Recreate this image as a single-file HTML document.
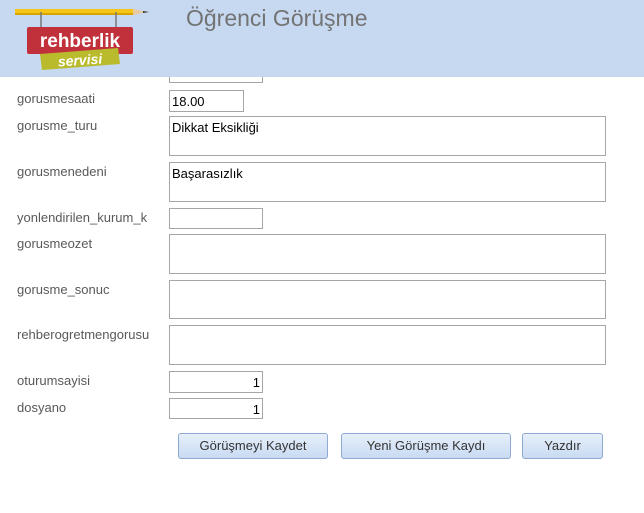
<!DOCTYPE html>
<html><head><meta charset="utf-8"><style>
*{margin:0;padding:0;box-sizing:border-box}
body{width:644px;height:513px;background:#fff;position:relative;overflow:hidden;font-family:"Liberation Sans",sans-serif;font-size:13px}
.hdr{position:absolute;left:0;top:0;width:644px;height:77px;background:#c6d9f1}
.title{position:absolute;left:186px;top:5px;font-size:23px;color:#737373}
.l{position:absolute;left:17px;color:#595959;font-size:13px}
.b{position:absolute;left:169px;border:1px solid #a6a6a6;background:#fff;color:#000;padding:3px 2px;font-size:13px;line-height:15px}
.btn{position:absolute;top:433px;height:26px;border:1px solid #8eaad0;border-radius:3px;background:linear-gradient(#e8f0fb,#c8daf2);color:#333;text-align:center;line-height:24px;font-size:13px}
</style></head><body>
<div class="b" style="top:62px;width:94px;height:21px"></div>
<div class="hdr"></div>
<div class="title">Öğrenci Görüşme</div>
<svg style="position:absolute;left:0;top:0" width="160" height="75">
<rect x="15" y="9" width="118" height="6" fill="#f5c518"/>
<rect x="15" y="13" width="118" height="2" fill="#d9a400"/>
<polygon points="133,9 147,12 133,15" fill="#e8c9a0"/>
<polygon points="143,11 149,12 143,13" fill="#333"/>
<line x1="41" y1="12" x2="41" y2="28" stroke="#777" stroke-width="1.5"/>
<line x1="116" y1="12" x2="116" y2="28" stroke="#777" stroke-width="1.5"/>
<rect x="27" y="27" width="106" height="27" rx="2" fill="#c0313b"/>
<text x="80" y="47" text-anchor="middle" font-family="Liberation Sans" font-weight="bold" font-size="19" fill="#fff">rehberlik</text>
<polygon points="40,54 118,48 120,64 42,70" fill="#b9bb2c"/>
<text x="80" y="65" text-anchor="middle" font-family="Liberation Sans" font-weight="bold" font-style="italic" font-size="14" fill="#fff" transform="rotate(-4 80 60)">servisi</text>
</svg>
<div class="l" style="top:91px">gorusmesaati</div>
<div class="b" style="top:90px;width:75px;height:22px">18.00</div>
<div class="l" style="top:118px">gorusme_turu</div>
<div class="b" style="top:116px;width:437px;height:40px">Dikkat Eksikliği</div>
<div class="l" style="top:164px">gorusmenedeni</div>
<div class="b" style="top:162px;width:437px;height:40px">Başarasızlık</div>
<div class="l" style="top:210px">yonlendirilen_kurum_k</div>
<div class="b" style="top:208px;width:94px;height:21px"></div>
<div class="l" style="top:236px">gorusmeozet</div>
<div class="b" style="top:234px;width:437px;height:40px"></div>
<div class="l" style="top:282px">gorusme_sonuc</div>
<div class="b" style="top:280px;width:437px;height:39px"></div>
<div class="l" style="top:327px">rehberogretmengorusu</div>
<div class="b" style="top:325px;width:437px;height:40px"></div>
<div class="l" style="top:373px">oturumsayisi</div>
<div class="b" style="top:371px;width:94px;height:22px;text-align:right">1</div>
<div class="l" style="top:400px">dosyano</div>
<div class="b" style="top:398px;width:94px;height:21px;text-align:right">1</div>
<div class="btn" style="left:178px;width:150px">Görüşmeyi Kaydet</div>
<div class="btn" style="left:341px;width:170px">Yeni Görüşme Kaydı</div>
<div class="btn" style="left:522px;width:81px">Yazdır</div>
</body></html>
